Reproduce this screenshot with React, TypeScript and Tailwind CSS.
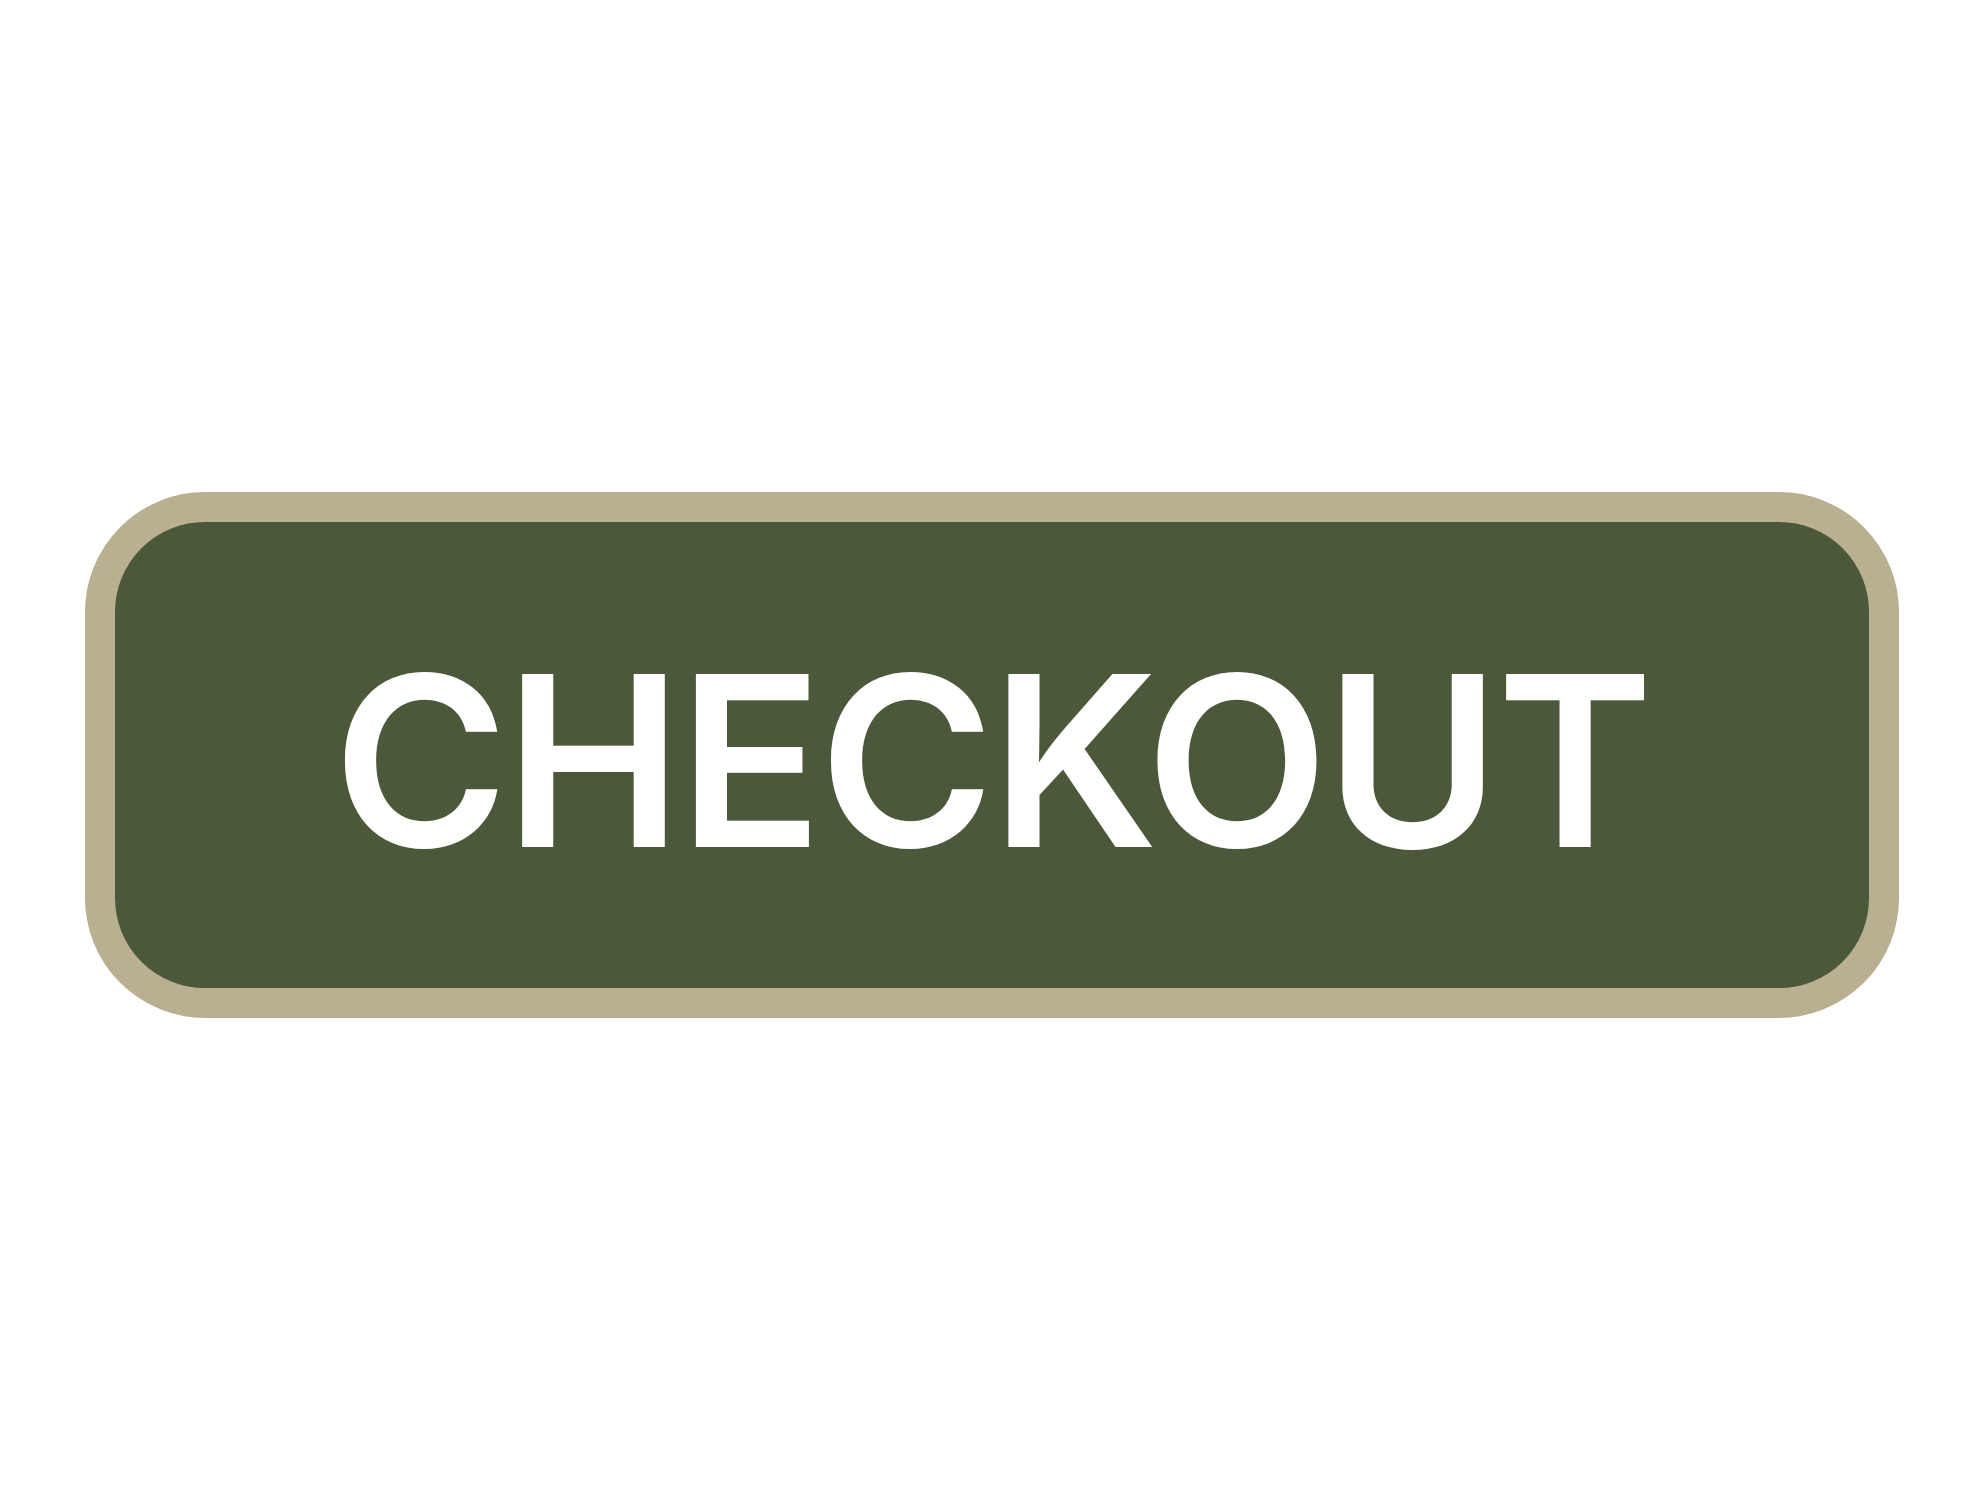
import React from 'react'

export default function App() {
  return (
    <div className="flex h-[1509px] w-full items-center justify-center bg-white">
      <button
        type="button"
        className="flex h-[526px] w-[1814px] items-center justify-center rounded-[120px] border-[30px] border-[#b9b092] bg-[#4b5839] pt-[10px] text-white"
      >
        <span className="font-['Inter',sans-serif] text-[238px] font-semibold leading-none tracking-[-0.015em]">
          CHECKOUT
        </span>
      </button>
    </div>
  )
}
